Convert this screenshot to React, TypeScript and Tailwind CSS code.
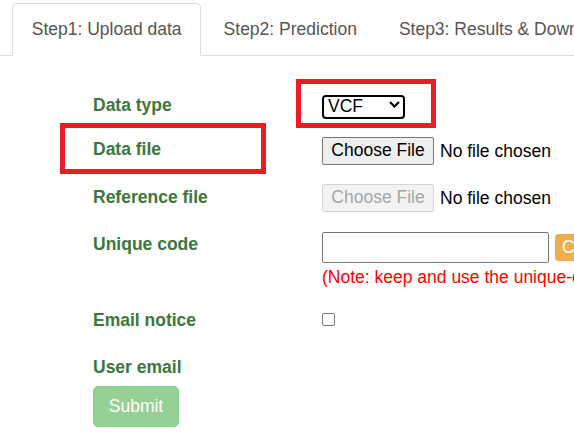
import { useState } from 'react'

const TABS = ['Step1: Upload data', 'Step2: Prediction', 'Step3: Results & Download']

function FileButton({ disabled }: { disabled?: boolean }) {
  return (
    <div className="flex items-center mt-[2px] h-[28px]">
      <button
        disabled={disabled}
        className={
          disabled
            ? 'h-[28px] w-[112px] rounded-[2px] border border-[#d4d4d4] bg-[#f3f3f3] text-[#a6a6a6] leading-none'
            : 'h-[28px] w-[112px] rounded-[2px] border border-[#767676] bg-[#efefef] text-black leading-none'
        }
      >
        Choose File
      </button>
      <span className="ml-[6px] text-black whitespace-nowrap">No file chosen</span>
    </div>
  )
}

export default function App() {
  const [tab, setTab] = useState(0)
  const [code, setCode] = useState('')
  const [notice, setNotice] = useState(false)

  return (
    <div
      className="relative h-[445px] w-full overflow-hidden bg-white text-[17.5px] text-[#333]"
      style={{ fontFamily: '"Liberation Sans", Arial, sans-serif' }}
    >
      {/* tabs */}
      <ul className="mt-[3px] flex border-b border-[#dddddd] pl-[12px] whitespace-nowrap">
        {TABS.map((t, i) => (
          <li key={t} className="mr-[2.5px] mb-[-1px] shrink-0">
            <button
              onClick={() => setTab(i)}
              className={
                i === tab
                  ? 'block rounded-t-[5px] border border-[#dddddd] border-b-white bg-white px-[18.75px] py-[13px] leading-[25px] text-[#555]'
                  : 'block rounded-t-[5px] border border-transparent px-[18.75px] py-[13px] leading-[25px] text-[#555]'
              }
            >
              {t}
            </button>
          </li>
        ))}
      </ul>

      {/* form */}
      <div className="mt-[36px] pl-[93px]">
        <div className="flex">
          <label className="w-[229px] shrink-0 pt-[1px] font-bold leading-[25px] text-[#3c763d]">Data type</label>
          <div className="relative mt-[1px] h-[24px] w-[83px]">
            <select className="h-[24px] w-[83px] appearance-none rounded-[4px] border-2 border-black bg-white pl-[4px] leading-none text-black outline-none">
              <option>VCF</option>
              <option>BAM</option>
            </select>
            <svg className="pointer-events-none absolute right-[5px] top-[8px]" width="11" height="7" viewBox="0 0 11 7">
              <path d="M1 1l4.5 4.5L10 1" fill="none" stroke="black" strokeWidth="2" />
            </svg>
          </div>
        </div>

        <div className="mt-[17px] flex">
          <label className="w-[229px] shrink-0 pt-[2px] font-bold leading-[25px] text-[#3c763d]">Data file</label>
          <FileButton />
        </div>

        <div className="mt-[17px] flex">
          <label className="w-[229px] shrink-0 pt-[3px] font-bold leading-[25px] text-[#3c763d]">Reference file</label>
          <FileButton disabled />
        </div>

        <div className="mt-[18px] flex">
          <label className="w-[229px] shrink-0 pt-[2px] font-bold leading-[25px] text-[#3c763d]">Unique code</label>
          <div className="mt-[2px]">
            <div className="flex items-center gap-[6px]">
              <input
                value={code}
                onChange={e => setCode(e.target.value)}
                className="h-[31px] w-[227px] shrink-0 rounded-[2px] border border-[#767676] px-[4px] text-black outline-none"
              />
              <button className="h-[27px] w-[90px] shrink-0 rounded-[4px] bg-[#f0ad4e] pl-[7px] text-left leading-none text-white">
                Check
              </button>
            </div>
            <p className="mt-[2px] whitespace-nowrap leading-[25px] text-[#ff0000]">
              (Note: keep and use the unique-code to retrieve your results)
            </p>
          </div>
        </div>

        <div className="mt-[18px] flex">
          <label className="w-[229px] shrink-0 font-bold leading-[25px] text-[#3c763d]">Email notice</label>
          <button
            onClick={() => setNotice(!notice)}
            className="mt-[5px] h-[13px] w-[13px] rounded-[2px] border border-[#767676] bg-white"
          >
            {notice && <span className="block h-full w-full bg-[#0075ff]" />}
          </button>
        </div>

        <div className="mt-[21px] flex">
          <label className="w-[229px] shrink-0 pt-[1px] font-bold leading-[25px] text-[#3c763d]">User email</label>
        </div>

        <button
          disabled
          className="mt-[6px] h-[41px] w-[86px] rounded-[5px] border border-[#8ccd8c] bg-[#95d195] text-white"
        >
          Submit
        </button>
      </div>

      {/* red annotation boxes */}
      <div className="pointer-events-none absolute left-[296px] top-[79px] h-[49px] w-[140px] border-[5px] border-[#ed1c24]" />
      <div className="pointer-events-none absolute left-[60px] top-[123px] h-[51px] w-[206px] border-[5px] border-[#ed1c24]" />
    </div>
  )
}
